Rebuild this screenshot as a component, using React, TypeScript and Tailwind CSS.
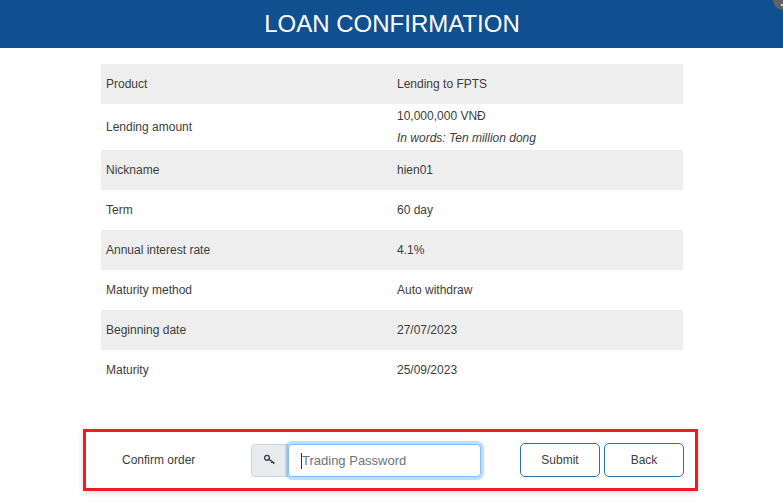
import React from 'react';

const rows = [
  { label: 'Product', value: 'Lending to FPTS' },
  { label: 'Lending amount', value: '10,000,000 VNĐ', note: 'In words: Ten million dong' },
  { label: 'Nickname', value: 'hien01' },
  { label: 'Term', value: '60 day' },
  { label: 'Annual interest rate', value: '4.1%' },
  { label: 'Maturity method', value: 'Auto withdraw' },
  { label: 'Beginning date', value: '27/07/2023' },
  { label: 'Maturity', value: '25/09/2023' },
];

const KeyIcon = () => (
  <svg width="13" height="12" viewBox="0 0 13 12" fill="none" stroke="#3a3f45" strokeWidth="1.4">
    <circle cx="4" cy="3.8" r="2.4" />
    <path d="M6 5.4 L11.4 9 M9.2 7.6 L8.4 9 M11 8.8 L10.4 10" />
  </svg>
);

export default function App() {
  return (
    <div className="relative h-[502px] w-[783px] overflow-hidden bg-white font-['Liberation_Sans',sans-serif] text-[12px] text-[#3c3c3c]">
      <div className="flex h-12 items-center justify-center bg-[#104f90] pl-[1px] text-[24px] text-white">
        LOAN CONFIRMATION
      </div>
      {/* corner of a floating button */}
      <div className="absolute top-[-10px] right-[-10px] h-5 w-5 rounded-full bg-[#5f6468]" />
      <div className="absolute top-[4px] right-0 h-[2px] w-[2px] bg-[#d8d8d8]" />

      <div className="mx-[101px] mt-4 w-[582px]">
        {rows.map((row, i) => (
          <div key={row.label} className={`flex items-center ${row.note ? 'h-[46px]' : 'h-10'} ${i % 2 === 0 ? 'bg-[#eeeeee]' : 'bg-white'}`}>
            <div className="w-[291px] pl-[5px]">{row.label}</div>
            <div className="pl-[5px]">
              <div>{row.value}</div>
              {row.note && <div className="mt-1 italic">{row.note}</div>}
            </div>
          </div>
        ))}
      </div>

      <div className="mt-[39px] ml-[83px] flex h-[62px] w-[615px] items-center border-[3px] border-[#ed1c24] pr-[11px] pl-[36px] shadow-[0_2px_6px_rgba(0,0,0,0.15)]">
        <div className="w-[129px]">Confirm order</div>
        <div className="flex h-[33px] w-[37px] items-center justify-center rounded-l-[4px] border border-[#ced4da] bg-[#e9ecef]">
          <KeyIcon />
        </div>
        <div className="flex h-[33px] w-[193px] items-center rounded-[4px] border border-[#80bdff] bg-white pt-[1px] pl-[12px] text-[13px] text-[#6c757d] shadow-[0_0_0_3px_rgba(0,123,255,0.25)]">
          <span className="border-l border-[#333] leading-[16px]">Trading Password</span>
        </div>
        <button className="ml-[39px] h-[34px] w-20 rounded-[5px] border border-[#2a6fa8] bg-white">Submit</button>
        <button className="ml-1 h-[34px] w-20 rounded-[5px] border border-[#2a6fa8] bg-white">Back</button>
      </div>
    </div>
  );
}
